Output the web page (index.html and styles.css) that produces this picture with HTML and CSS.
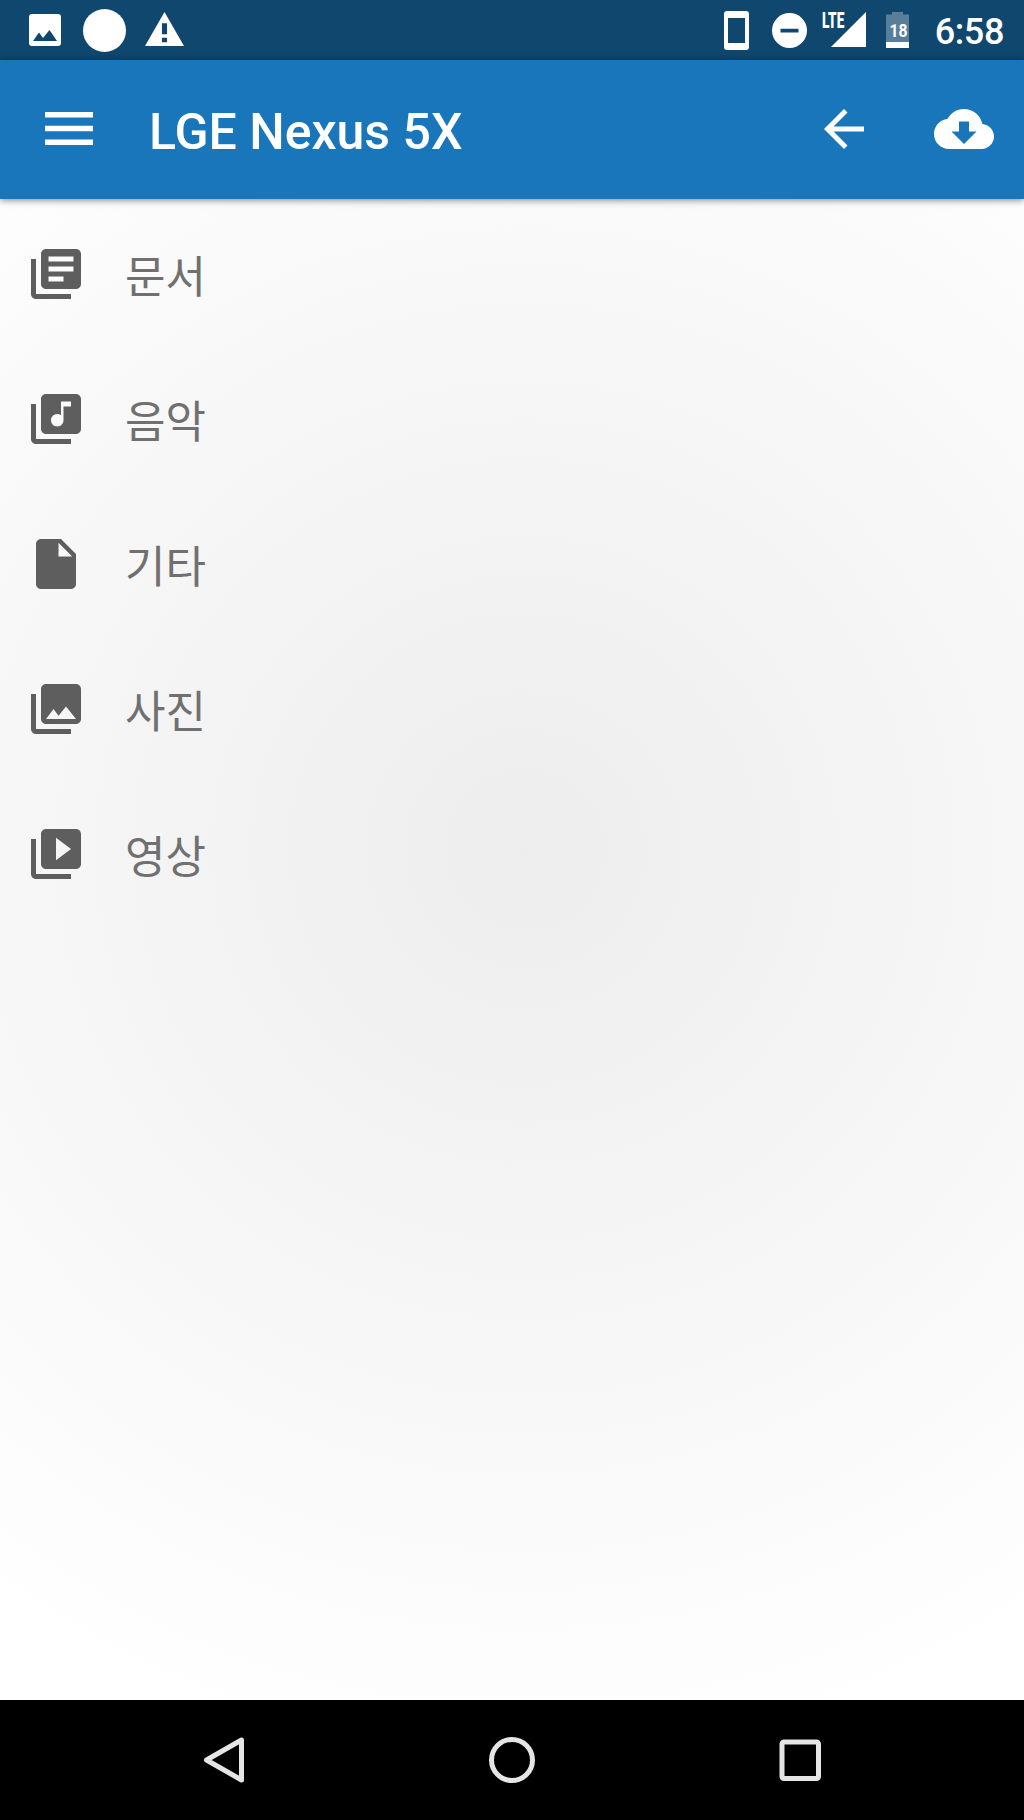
FILE: index.html
```
<!DOCTYPE html>
<html lang="ko">
<head>
  <meta charset="UTF-8">
  <meta name="viewport" content="width=device-width, initial-scale=1.0">
  <title>LGE Nexus 5X</title>
  <link rel="stylesheet" href="styles.css">
</head>
<body>
  <div class="screen">
    <div class="status-bar">
      <div class="notifications">
        <svg class="icon-photo" viewBox="0 0 32 32"><path fill-rule="evenodd" d="M3 0h26a3 3 0 0 1 3 3v26a3 3 0 0 1-3 3H3a3 3 0 0 1-3-3V3a3 3 0 0 1 3-3zM4 27h24l-7.500-11-6.500 8-4-5.500z"/></svg>
        <span class="dot"></span>
        <svg class="icon-warning" viewBox="0 0 38 33"><path fill-rule="evenodd" d="M0 33L19 0l19 33zM16.500 11v10.500h5V11zM16.500 25v4.500h5V25z"/></svg>
      </div>
      <div class="system">
        <svg class="icon-phone" viewBox="0 0 25 39"><path fill-rule="evenodd" d="M3 0h19a3 3 0 0 1 3 3v33a3 3 0 0 1-3 3H3a3 3 0 0 1-3-3V3a3 3 0 0 1 3-3zM4 7v25h17V7z"/></svg>
        <svg class="icon-dnd" viewBox="0 0 35 35"><path fill-rule="evenodd" d="M17.500 0a17.500 17.500 0 1 0 0 35a17.500 17.500 0 1 0 0-35zM8.500 15.800v3.600h18v-3.600z"/></svg>
        <div class="signal">
          <span class="lte">LTE</span>
          <svg viewBox="0 0 35 35"><path d="M0 35L35 0v35z"/></svg>
        </div>
        <div class="battery">
          <svg viewBox="0 0 23 36"><path class="shell" d="M0 2.500h6V0h11v2.500h6V30H0z"/><path d="M0 30h23v6H0z"/></svg>
          <span class="level">18</span>
        </div>
        <span class="clock">6:58</span>
      </div>
    </div>

    <div class="toolbar">
      <svg class="icon-menu" viewBox="0 0 48 33"><path d="M0 0h48v5.500H0zM0 13.700h48v5.500H0zM0 27.400h48v5.500H0z"/></svg>
      <h1 class="title">LGE Nexus 5X</h1>
      <svg class="icon icon-back" viewBox="0 0 24 24"><path d="M20 11H7.830l5.590-5.590L12 4l-8 8 8 8 1.410-1.410L7.830 13H20v-2z"/></svg>
      <svg class="icon" viewBox="0 0 24 24"><path d="M19.350 10.040C18.670 6.590 15.640 4 12 4 9.110 4 6.600 5.640 5.350 8.040 2.340 8.360 0 10.910 0 14c0 3.310 2.690 6 6 6h13c2.760 0 5-2.240 5-5 0-2.640-2.050-4.780-4.650-4.960zM17 13l-5 5-5-5h3V9h4v4h3z"/></svg>
    </div>

    <ul class="list">
      <li class="item">
        <svg class="icon" viewBox="0 0 24 24"><path d="M4 6H2v14c0 1.100.900 2 2 2h14v-2H4V6zm16-4H8c-1.100 0-2 .900-2 2v12c0 1.100.900 2 2 2h12c1.100 0 2-.900 2-2V4c0-1.100-.900-2-2-2zm-1 9H9V9h10v2zm-4 4H9v-2h6v2zm4-8H9V5h10v2z"/></svg>
        <span>문서</span>
      </li>
      <li class="item">
        <svg class="icon" viewBox="0 0 24 24"><path d="M20 2H8c-1.100 0-2 .900-2 2v12c0 1.100.900 2 2 2h12c1.100 0 2-.900 2-2V4c0-1.100-.900-2-2-2zm-2 5h-3v5.500c0 1.380-1.120 2.500-2.500 2.500S10 13.880 10 12.500s1.120-2.500 2.500-2.500c.570 0 1.080.190 1.500.510V5h4v2zM4 6H2v14c0 1.100.900 2 2 2h14v-2H4V6z"/></svg>
        <span>음악</span>
      </li>
      <li class="item">
        <svg class="icon" viewBox="0 0 24 24"><path d="M6 2c-1.100 0-1.990.900-1.990 2L4 20c0 1.100.890 2 1.990 2H18c1.100 0 2-.900 2-2V8l-6-6H6zm7 7V3.500L18.500 9H13z"/></svg>
        <span>기타</span>
      </li>
      <li class="item">
        <svg class="icon" viewBox="0 0 24 24"><path d="M22 16V4c0-1.100-.900-2-2-2H8c-1.100 0-2 .900-2 2v12c0 1.100.900 2 2 2h12c1.100 0 2-.900 2-2zM11 12l2.030 2.710L16 11l4 5H8l3-4zM2 6v14c0 1.100.900 2 2 2h14v-2H4V6H2z"/></svg>
        <span>사진</span>
      </li>
      <li class="item">
        <svg class="icon" viewBox="0 0 24 24"><path d="M4 6H2v14c0 1.100.900 2 2 2h14v-2H4V6zm16-4H8c-1.100 0-2 .900-2 2v12c0 1.100.900 2 2 2h12c1.100 0 2-.900 2-2V4c0-1.100-.900-2-2-2zm-8 12.500v-9l6 4.500-6 4.500z"/></svg>
        <span>영상</span>
      </li>
    </ul>

    <div class="nav-bar">
      <svg viewBox="0 0 48 48"><path d="M41.500 4v40L6.500 24z"/></svg>
      <svg viewBox="0 0 48 48"><circle cx="24" cy="24" r="20.500"/></svg>
      <svg viewBox="0 0 48 48"><rect x="6" y="6" width="36.500" height="36.500" rx="2"/></svg>
    </div>
  </div>
</body>
</html>
```
FILE: styles.css
```
* {
  box-sizing: border-box;
}

body {
  margin: 0;
  font-family: Roboto, "Noto Sans CJK KR", sans-serif;
}

svg {
  display: block;
  flex: none;
  fill: currentColor;
}

.screen {
  height: 1820px;
  display: flex;
  flex-direction: column;
  background: radial-gradient(circle 930px at 525px 850px, #ededed, #ffffff);
}

.status-bar {
  height: 60px;
  padding: 0 20px 0 29px;
  display: flex;
  justify-content: space-between;
  background: #10476e;
  color: #ffffff;
}

.notifications,
.system {
  display: flex;
  align-items: center;
}

.icon-photo {
  width: 32px;
  height: 32px;
}

.dot {
  width: 43px;
  height: 43px;
  margin: 0 19px 0 22px;
  border-radius: 50%;
  background: #ffffff;
}

.icon-warning {
  width: 39px;
  height: 34px;
  margin-bottom: 2px;
}

.icon-phone {
  width: 25px;
  height: 39px;
}

.icon-dnd {
  width: 35px;
  height: 35px;
  margin-left: 23px;
}

.signal {
  position: relative;
  margin-left: 24px;
  margin-bottom: 1px;
}

.signal svg {
  width: 35px;
  height: 35px;
}

.lte {
  position: absolute;
  left: -9px;
  top: 0;
  font-size: 22px;
  font-weight: 900;
  line-height: 18px;
  transform: scaleX(0.62);
  transform-origin: left;
}

.battery {
  position: relative;
  margin-left: 20px;
}

.battery svg {
  width: 23px;
  height: 36px;
}

.shell {
  opacity: 0.3;
}

.level {
  position: absolute;
  left: 1px;
  top: 9px;
  width: 23px;
  font-size: 19px;
  font-weight: 700;
  line-height: 20px;
  text-align: center;
  transform: scaleX(0.83);
}

.clock {
  margin-left: 26px;
  padding-top: 3px;
  font-size: 36px;
  font-weight: 500;
  line-height: 42px;
  letter-spacing: -0.4px;
}

.toolbar {
  position: relative;
  height: 139px;
  padding: 0 30px 2px 45px;
  display: flex;
  align-items: center;
  background: #1a76bb;
  color: #ffffff;
  box-shadow: 0 1px 7px rgba(0, 0, 0, 0.5);
}

.icon-menu {
  width: 48px;
  height: 33px;
}

.title {
  flex: 1;
  margin: 0 0 0 56px;
  padding-top: 6px;
  font-size: 50px;
  font-weight: 500;
  line-height: 60px;
}

.icon {
  width: 60px;
  height: 60px;
}

.icon-back {
  margin-right: 60px;
}

.list {
  flex: 1;
  margin: 0;
  padding: 2.5px 0 0;
  list-style: none;
  color: #707070;
}

.item {
  height: 145px;
  padding-left: 25.5px;
  display: flex;
  align-items: center;
  gap: 39.5px;
  font-size: 44px;
  line-height: 60px;
}

.item span {
  padding-top: 7px;
}

.item .icon {
  color: #5e5e5e;
}

.nav-bar {
  height: 120px;
  padding: 0 200px;
  display: flex;
  align-items: center;
  justify-content: space-between;
  background: #000000;
}

.nav-bar svg {
  width: 48px;
  height: 48px;
  fill: none;
  stroke: #e5e5e5;
  stroke-width: 5;
  stroke-linejoin: round;
}
```
